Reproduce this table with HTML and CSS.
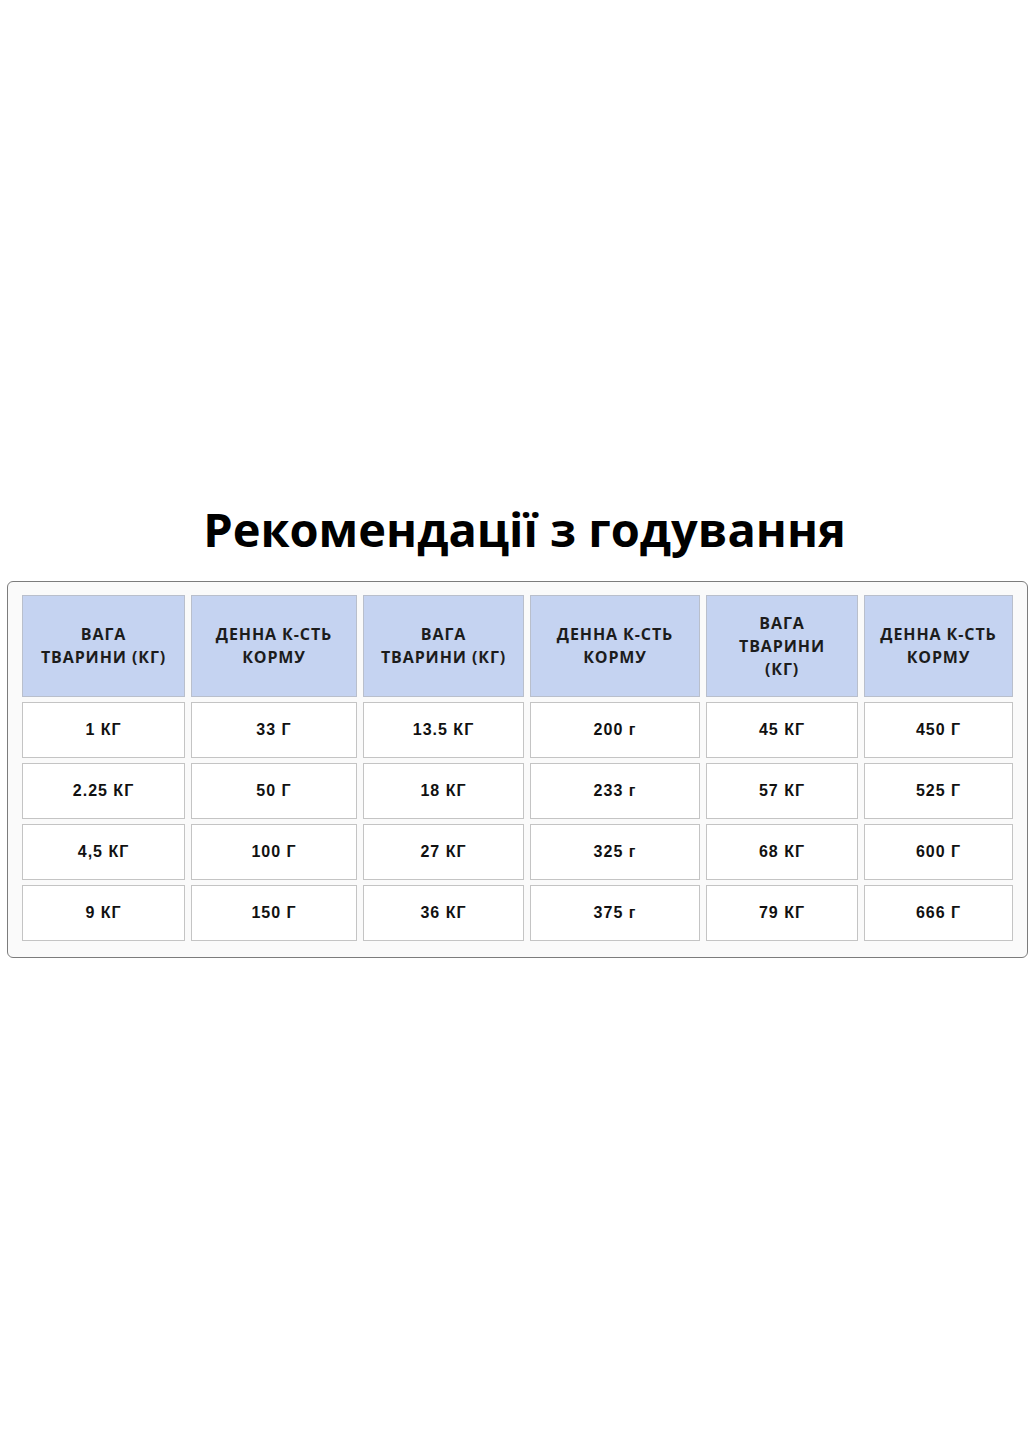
FILE: index.html
```html
<!DOCTYPE html>
<html lang="uk">
<head>
<meta charset="utf-8">
<title>Рекомендації з годування</title>
<link rel="stylesheet" href="styles.css">
</head>
<body>
<main class="page">
  <h1 class="title">Рекомендації з годування</h1>
  <section class="card">
    <div class="grid">
      <div class="cell head">ВАГА<br>ТВАРИНИ (КГ)</div>
      <div class="cell head">ДЕННА К-СТЬ<br>КОРМУ</div>
      <div class="cell head">ВАГА<br>ТВАРИНИ (КГ)</div>
      <div class="cell head">ДЕННА К-СТЬ<br>КОРМУ</div>
      <div class="cell head">ВАГА<br>ТВАРИНИ<br>(КГ)</div>
      <div class="cell head">ДЕННА К-СТЬ<br>КОРМУ</div>

      <div class="cell">1 КГ</div>
      <div class="cell">33 Г</div>
      <div class="cell">13.5 КГ</div>
      <div class="cell">200 г</div>
      <div class="cell">45 КГ</div>
      <div class="cell">450 Г</div>

      <div class="cell">2.25 КГ</div>
      <div class="cell">50 Г</div>
      <div class="cell">18 КГ</div>
      <div class="cell">233 г</div>
      <div class="cell">57 КГ</div>
      <div class="cell">525 Г</div>

      <div class="cell">4,5 КГ</div>
      <div class="cell">100 Г</div>
      <div class="cell">27 КГ</div>
      <div class="cell">325 г</div>
      <div class="cell">68 КГ</div>
      <div class="cell">600 Г</div>

      <div class="cell">9 КГ</div>
      <div class="cell">150 Г</div>
      <div class="cell">36 КГ</div>
      <div class="cell">375 г</div>
      <div class="cell">79 КГ</div>
      <div class="cell">666 Г</div>
    </div>
  </section>
</main>
</body>
</html>
```

FILE: styles.css
```css
html, body {
  margin: 0;
  padding: 0;
  background: #ffffff;
}

.page {
  padding-top: 497px;
}

.title {
  margin: 0;
  font-family: "Open Sans", "DejaVu Sans", sans-serif;
  font-weight: 700;
  font-size: 47px;
  line-height: 64px;
  color: #000;
  text-align: center;
  padding-left: 14px;
}

.card {
  margin: 20px 7px 0 7px;
  border: 1px solid #7c7c7c;
  border-radius: 6px;
  background: #fafafa;
  padding: 13px 14px 16px 14px;
}

.grid {
  display: grid;
  grid-template-columns: 163px 166px 161px 170px 152px 149px;
  grid-template-rows: 102px repeat(4, 56px);
  column-gap: 6px;
  row-gap: 5px;
}

.cell {
  box-sizing: border-box;
  display: flex;
  align-items: center;
  justify-content: center;
  text-align: center;
  background: #ffffff;
  border: 1px solid #c4c4c4;
  font-family: "Liberation Sans", Arial, sans-serif;
  font-weight: 700;
  font-size: 16px;
  letter-spacing: 1px;
  color: #111;
}

.head {
  background: #c5d3f1;
  border-color: #b9bfcc;
  font-family: "Open Sans", "DejaVu Sans", sans-serif;
  font-size: 16px;
  line-height: 23px;
  letter-spacing: 0.9px;
  color: #1c1c1c;
}
```
